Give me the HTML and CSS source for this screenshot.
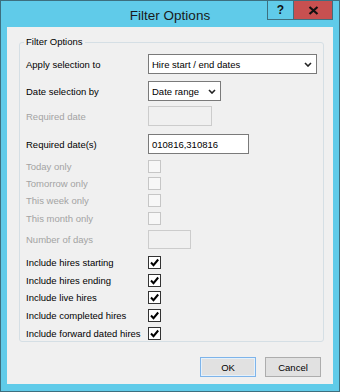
FILE: index.html
```html
<!DOCTYPE html>
<html lang="en">
<head>
  <meta charset="UTF-8" />
  <title>Filter Options</title>
  <link rel="stylesheet" href="styles.css">
</head>
<body>
  <div class="window">
    <div class="titlebar">
      <span></span>
      <div class="title">Filter Options</div>
      <div class="caption-buttons">
        <div class="cap help">?</div>
        <div class="cap close">
          <svg width="11" height="9" viewBox="0 0 11 9"><path d="M1.5 1 L9.5 8 M9.5 1 L1.5 8" stroke="#111" stroke-width="2.2" fill="none"/></svg>
        </div>
      </div>
    </div>

    <div class="client">
      <fieldset class="group">
        <legend>Filter Options</legend>

        <div class="row">
          <label>Apply selection to</label>
          <div class="combo combo-wide">Hire start / end dates
            <svg class="chevron" width="8" height="5" viewBox="0 0 8 5"><path d="M1 1 L4 4 L7 1" stroke="#222" stroke-width="1.6" fill="none"/></svg>
          </div>
        </div>

        <div class="row gap-lg">
          <label>Date selection by</label>
          <div class="combo combo-short">Date range
            <svg class="chevron" width="8" height="5" viewBox="0 0 8 5"><path d="M1 1 L4 4 L7 1" stroke="#222" stroke-width="1.6" fill="none"/></svg>
          </div>
        </div>

        <div class="row">
          <label class="disabled">Required date</label>
          <div class="textbox off date-box"></div>
        </div>

        <div class="row gap-xl">
          <label>Required date(s)</label>
          <div class="textbox dates-box">010816,310816</div>
        </div>

        <div class="row check gap-md">
          <label class="disabled">Today only</label>
          <span class="box off"></span>
        </div>
        <div class="row check gap-sm">
          <label class="disabled">Tomorrow only</label>
          <span class="box off"></span>
        </div>
        <div class="row check gap-sm">
          <label class="disabled">This week only</label>
          <span class="box off"></span>
        </div>
        <div class="row check">
          <label class="disabled">This month only</label>
          <span class="box off"></span>
        </div>

        <div class="row days">
          <label class="disabled">Number of days</label>
          <div class="textbox off days-box"></div>
        </div>

        <div class="row check gap-lg">
          <label>Include hires starting</label>
          <span class="box"><svg width="11" height="11" viewBox="0 0 11 11"><path d="M2 5.5 L4.5 8.2 L9.2 2.5" stroke="#000" stroke-width="2" fill="none"/></svg></span>
        </div>
        <div class="row check">
          <label>Include hires ending</label>
          <span class="box"><svg width="11" height="11" viewBox="0 0 11 11"><path d="M2 5.5 L4.5 8.2 L9.2 2.5" stroke="#000" stroke-width="2" fill="none"/></svg></span>
        </div>
        <div class="row check gap-sm">
          <label>Include live hires</label>
          <span class="box"><svg width="11" height="11" viewBox="0 0 11 11"><path d="M2 5.5 L4.5 8.2 L9.2 2.5" stroke="#000" stroke-width="2" fill="none"/></svg></span>
        </div>
        <div class="row check">
          <label>Include completed hires</label>
          <span class="box"><svg width="11" height="11" viewBox="0 0 11 11"><path d="M2 5.5 L4.5 8.2 L9.2 2.5" stroke="#000" stroke-width="2" fill="none"/></svg></span>
        </div>
        <div class="row check">
          <label>Include forward dated hires</label>
          <span class="box"><svg width="11" height="11" viewBox="0 0 11 11"><path d="M2 5.5 L4.5 8.2 L9.2 2.5" stroke="#000" stroke-width="2" fill="none"/></svg></span>
        </div>
      </fieldset>

      <div class="buttons">
        <button class="btn btn-default">OK</button>
        <button class="btn">Cancel</button>
      </div>
    </div>
  </div>
</body>
</html>
```

FILE: styles.css
```css
:root {
  --frame: #60cbe9;
  --frame-edge: #3d6f7f;
  --face: #f0f0f0;
  --text: #000000;
  --gray-text: #a3a3a3;
  --group-line: #d5dfe5;
}

* {
  box-sizing: border-box;
}

body {
  margin: 0;
  font-family: 'Liberation Sans', Arial, sans-serif;
  font-size: 9.5px;
  color: var(--text);
  background: #ffffff;
}

.window {
  width: 340px;
  height: 392px;
  background: var(--frame);
  border: 1px solid var(--frame-edge);
  padding: 0 6px 7px;
  display: flex;
  flex-direction: column;
}

.titlebar {
  height: 26px;
  display: grid;
  grid-template-columns: 1fr auto 1fr;
  align-items: center;
}

.title {
  font-size: 13.5px;
  color: #1a1a1a;
  padding-top: 2px;
}

.caption-buttons {
  justify-self: end;
  align-self: start;
  margin-top: -1px;
  display: flex;
}

.cap {
  height: 20px;
  display: flex;
  align-items: center;
  justify-content: center;
  border: 1px solid var(--frame-edge);
}

.help {
  width: 26px;
  border-right: none;
  font-weight: bold;
  font-size: 12px;
  color: #111;
}

.close {
  width: 40px;
  background: #c75050;
}

.client {
  flex: 1;
  background: var(--face);
  padding: 9px 11px 0 12px;
}

.group {
  margin: 0;
  border: 1px solid var(--group-line);
  border-radius: 3px;
  padding: 6px 6px 1px;
}

.group legend {
  padding: 0 2px;
  margin-left: -2px;
  line-height: 12px;
}

.row {
  display: flex;
  align-items: center;
  height: 20px;
  margin-top: 5px;
}

.row:first-of-type {
  margin-top: 0;
}

.row.check {
  height: 13px;
}

.row.days {
  height: 19px;
}

.gap-sm { margin-top: 4px; }
.gap-md { margin-top: 6px; }
.gap-lg { margin-top: 7px; }
.gap-xl { margin-top: 8px; }

.row label {
  width: 122px;
  flex-shrink: 0;
}

.row label.disabled {
  color: var(--gray-text);
}

.combo, .textbox {
  height: 100%;
  background: #ffffff;
  border: 1px solid #7a7a7a;
  display: flex;
  align-items: center;
  padding-left: 3px;
}

.combo {
  justify-content: space-between;
  padding-right: 4px;
}

.combo-wide { width: 169px; }
.combo-short { width: 73px; }

.chevron {
  flex-shrink: 0;
}

.textbox.off {
  background: var(--face);
  border-color: #cccccc;
}

.date-box { width: 64px; }
.dates-box { width: 101px; }
.days-box { width: 43px; }

.box {
  width: 13px;
  height: 13px;
  border: 1px solid #333333;
  background: #ffffff;
  display: flex;
  align-items: center;
  justify-content: center;
}

.box.off {
  border-color: #c6c6c6;
  background: #f7f7f7;
}

.buttons {
  display: flex;
  justify-content: flex-end;
  gap: 9px;
  margin-top: 15px;
  padding-right: 1px;
}

.btn {
  width: 56px;
  height: 20px;
  padding: 0;
  font-family: inherit;
  font-size: 9.5px;
  color: var(--text);
  background: #e1e1e1;
  border: 1px solid #adadad;
}

.btn-default {
  border-color: #7eb4ea;
  box-shadow: inset 0 0 0 1px #e5f1fb;
}
```
